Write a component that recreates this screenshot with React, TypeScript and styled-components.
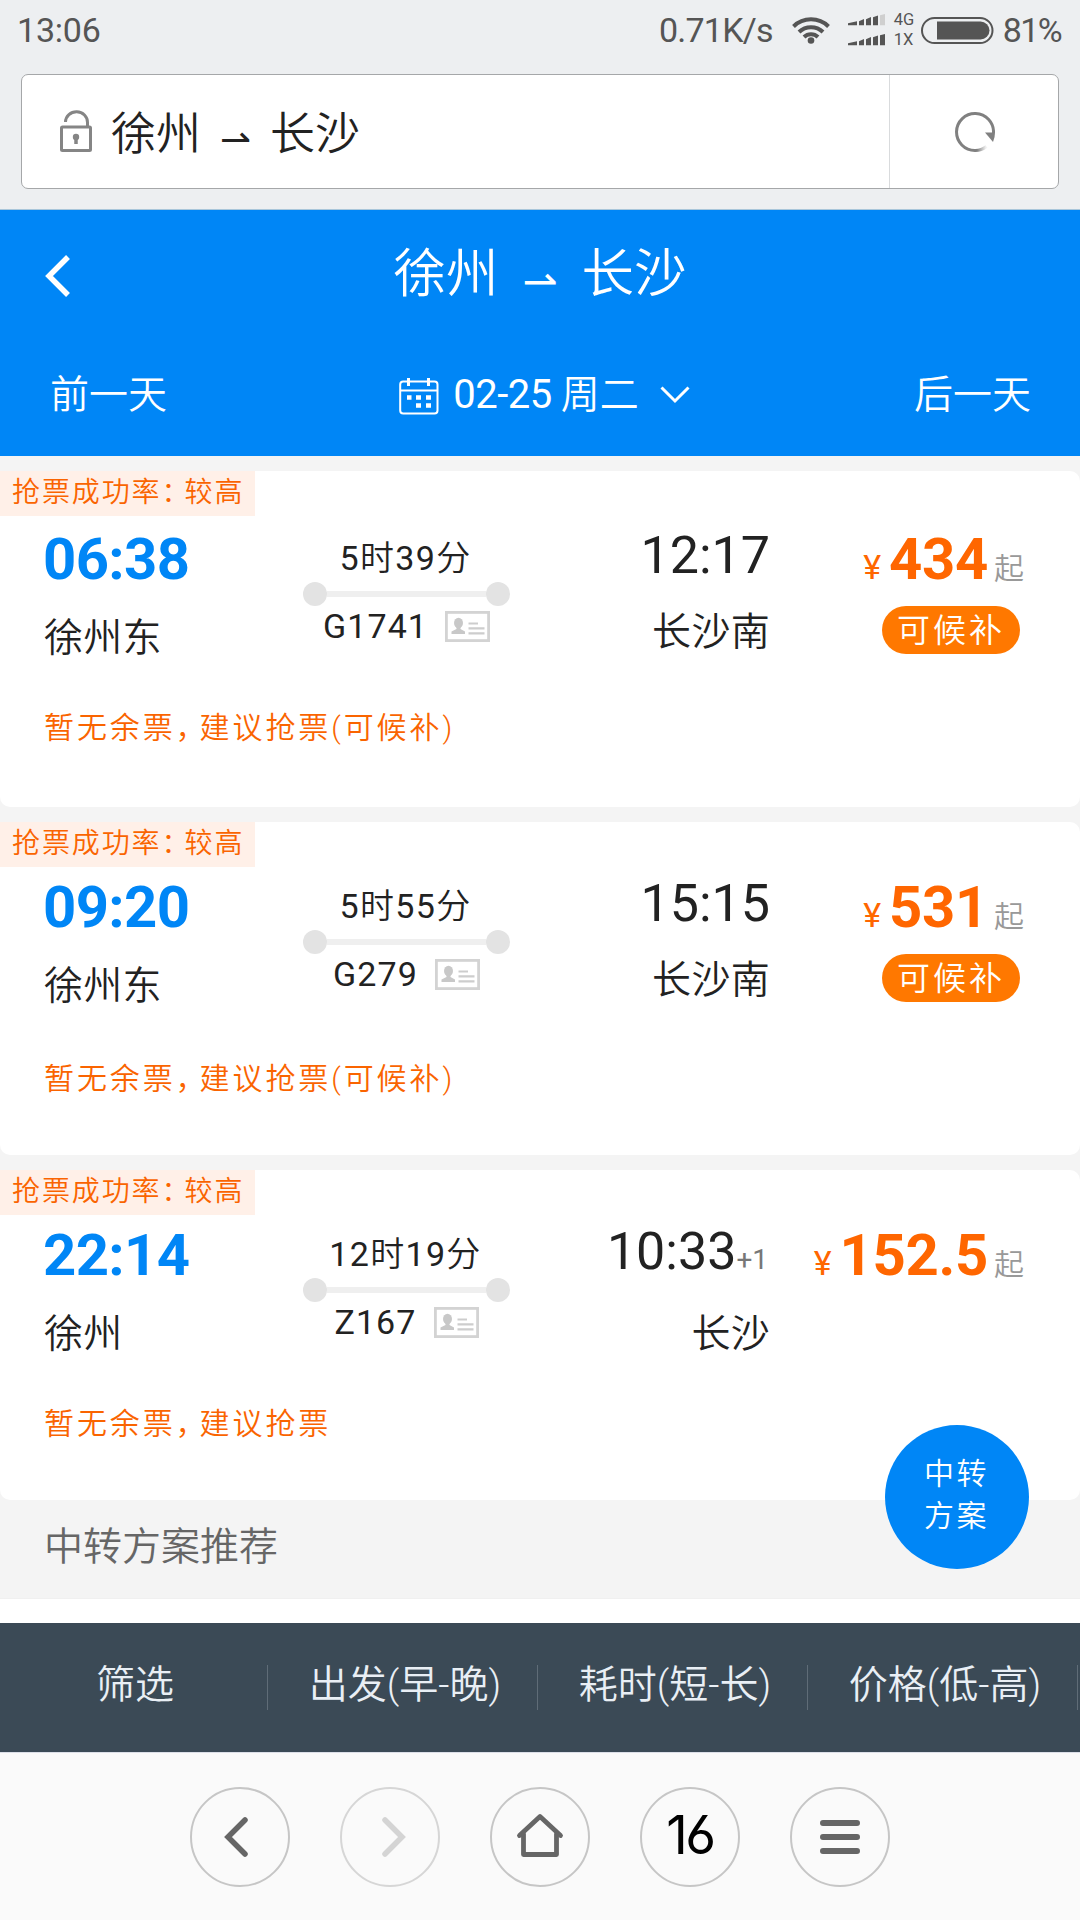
import React from "react";
import styled, { createGlobalStyle } from "styled-components";

const GlobalStyle = createGlobalStyle`
  * { box-sizing: border-box; }
  body {
    margin: 0;
    background: #ffffff;
    font-family: Roboto, "Noto Sans CJK SC", sans-serif;
    color: #222222;
  }
`;

const Screen = styled.div`
  width: 1080px;
  height: 1920px;
  display: flex;
  flex-direction: column;
  overflow: hidden;
  background: #ffffff;
`;

/* ---------- status bar ---------- */

const StatusBar = styled.header`
  height: 60px;
  padding: 0 19px 0 17px;
  display: flex;
  align-items: center;
  background: #edeff1;
  color: #555555;
  font-size: 34px;
  line-height: 60px;
`;

const Clock = styled.span`
  flex: 1;
  letter-spacing: -0.2px;
`;

const Speed = styled.span`
  letter-spacing: -0.8px;
  margin-right: 19px;
`;

const Percent = styled.span`
  letter-spacing: -1.6px;
`;

const WifiSvg = styled.svg`
  width: 38px;
  height: 28px;
  margin-right: 18px;
`;

const SignalSvg = styled.svg`
  width: 37px;
  height: 32px;
  margin-right: 9px;
`;

const NetLabels = styled.span`
  display: flex;
  flex-direction: column;
  width: 27px;
  font-size: 16.5px;
  line-height: 20px;
`;

const BatterySvg = styled.svg`
  width: 73px;
  height: 27px;
  margin-right: 9px;
`;

/* ---------- address bar ---------- */

const AddressArea = styled.div`
  height: 150px;
  padding: 14px 21px 0;
  background: #edeff1;
  border-bottom: 1px solid #a9c6da;
`;

const AddressBox = styled.div`
  height: 115px;
  display: flex;
  background: #ffffff;
  border: 1px solid #a5a7a9;
  border-radius: 7px;
`;

const AddressMain = styled.div`
  flex: 1;
  display: flex;
  align-items: center;
  padding-left: 38px;
`;

const LockSvg = styled.svg`
  width: 32px;
  height: 42px;
  margin: -1px 19px 0 0;
`;

const Route = styled.div<{ $size: number; $gap: number; $top: number }>`
  display: flex;
  align-items: center;
  gap: ${(p) => p.$gap}px;
  padding-top: ${(p) => p.$top}px;
  font-size: ${(p) => p.$size}px;
  font-weight: 350;
  line-height: 1.4;
`;

const Harpoon = styled.span<{ $size: number; $drop: number }>`
  font-family: "DejaVu Sans", sans-serif;
  font-weight: 400;
  font-size: ${(p) => p.$size}px;
  line-height: 1;
  padding-top: ${(p) => p.$drop}px;
`;

const Reload = styled.button`
  width: 169px;
  padding: 0;
  border: 0;
  border-left: 1px solid #d9dbdd;
  background: none;
  display: flex;
  align-items: center;
  justify-content: center;
`;

/* ---------- blue header ---------- */

const Header = styled.section`
  height: 246px;
  background: #0086f6;
  color: #ffffff;
  display: flex;
  flex-direction: column;
`;

const TitleRow = styled.div`
  height: 126px;
  display: grid;
  grid-template-columns: 1fr auto 1fr;
  align-items: center;
  padding: 0 45px;
`;

const BackSvg = styled.svg`
  width: 25px;
  height: 42px;
  margin-top: 6px;
`;

const DateRow = styled.div`
  height: 120px;
  padding: 0 49px 2px 50px;
  display: grid;
  grid-template-columns: 1fr auto 1fr;
  align-items: center;
  font-size: 39px;
`;

const DayLink = styled.span<{ $end?: boolean }>`
  text-align: ${(p) => (p.$end ? "right" : "left")};
  line-height: 60px;
  font-weight: 350;
`;

const DatePick = styled.div`
  display: flex;
  align-items: center;
  padding-left: 8px;
  line-height: 60px;
`;

const CalendarSvg = styled.svg`
  width: 40px;
  height: 38px;
  margin: 1px 14px 0 0;
`;

const DateText = styled.span`
  font-size: 40px;
  letter-spacing: -0.5px;
  margin-right: 9px;
`;

const Weekday = styled.span`
  font-weight: 350;
  margin-right: 21px;
`;

/* ---------- train list ---------- */

const List = styled.main`
  background: #f4f4f4;
  padding-top: 15px;
  display: flex;
  flex-direction: column;
  gap: 15px;
`;

const Card = styled.article<{ $height: number }>`
  height: ${(p) => p.$height}px;
  background: #ffffff;
  border-radius: 10px;
`;

const Tag = styled.div`
  width: 255px;
  height: 45px;
  padding-left: 12px;
  background: #fff0e8;
  color: #fa6400;
  font-size: 28px;
  line-height: 43px;
  letter-spacing: 1.9px;
  font-weight: 350;
  white-space: nowrap;
`;

const Punct = styled.span<{ $pull: number }>`
  letter-spacing: ${(p) => -p.$pull}px;
`;

const Trip = styled.div<{ $lead: number; $tail: number }>`
  padding: ${(p) => p.$lead}px 0 0 45px;
  height: ${(p) => p.$lead + 189 + p.$tail}px;
  display: grid;
  grid-template-columns: 258px 207px 258px 256px;
`;

const Depart = styled.div`
  display: flex;
  flex-direction: column;
  margin-left: -1px;
`;

const DepartTime = styled.strong`
  margin-left: -1px;
  color: #0086f6;
  font-size: 58px;
  font-weight: 700;
  line-height: 80px;
  letter-spacing: -0.6px;
`;

const Station = styled.span<{ $drop?: number; $line?: number }>`
  font-size: 39px;
  line-height: ${(p) => p.$line || 78}px;
  letter-spacing: 0.3px;
  font-weight: 350;
  padding-top: ${(p) => p.$drop || 0}px;
`;

const Destination = styled(Station)`
  margin-right: -2px;
`;

const Middle = styled.div`
  display: flex;
  flex-direction: column;
  align-items: center;
  padding-top: 17px;
`;

const Duration = styled.span`
  font-size: 34px;
  line-height: 44px;
  letter-spacing: 1.3px;
  margin-right: 2px;
`;

const Cjk = styled.span`
  font-weight: 350;
  font-size: 34px;
`;

const Track = styled.div`
  width: 207px;
  height: 24px;
  margin-top: 2px;
  display: flex;
  align-items: center;
`;

const Dot = styled.i`
  width: 24px;
  height: 24px;
  border-radius: 50%;
  background: #e3e3e3;
`;

const Rail = styled.i`
  flex: 1;
  height: 6px;
  background: #efefef;
`;

const TrainNo = styled.div`
  height: 40px;
  display: flex;
  align-items: center;
  font-size: 34px;
  line-height: 40px;
  letter-spacing: 1.1px;
`;

const IdSvg = styled.svg`
  width: 45px;
  height: 31px;
  margin-left: 17px;
`;

const Arrive = styled.div`
  display: flex;
  flex-direction: column;
  align-items: flex-end;
`;

const ArriveTime = styled.span<{ $shift: number }>`
  font-size: 52px;
  line-height: 73px;
  margin-right: ${(p) => -p.$shift}px;
`;

const PlusDay = styled.small`
  font-size: 28px;
  line-height: 28px;
  color: #777777;
`;

const Price = styled.div`
  display: flex;
  flex-direction: column;
  align-items: flex-end;
`;

const Amount = styled.div`
  height: 80px;
  display: flex;
  align-items: baseline;
  line-height: 80px;
  color: #ff6600;
`;

const Yen = styled.span`
  font-size: 34px;
  margin-right: 8px;
`;

const Figure = styled.strong`
  font-size: 58px;
  font-weight: 700;
  letter-spacing: -0.3px;
`;

const From = styled.span`
  color: #999999;
  font-size: 30px;
  margin-left: 6px;
  font-weight: 350;
`;

const Badge = styled.span`
  width: 138px;
  height: 48px;
  margin: 7px 4px 0 0;
  padding-left: 15px;
  border-radius: 24px;
  background: #ff7800;
  color: #ffffff;
  font-size: 33px;
  line-height: 50px;
  letter-spacing: 3px;
  font-weight: 350;
`;

const Hint = styled.p`
  margin: 0 0 0 44px;
  color: #fa6400;
  font-size: 30px;
  line-height: 40px;
  letter-spacing: 2.9px;
  font-weight: 350;
`;

/* ---------- transfer + sort ---------- */

const TransferBar = styled.section`
  position: relative;
  height: 99px;
  padding: 14px 0 0 44px;
  background: #f4f4f4;
  border-bottom: 1px solid #f0f0f0;
  color: #666666;
  font-size: 39px;
  line-height: 66px;
  font-weight: 350;
`;

const Floating = styled.button`
  position: absolute;
  right: 51px;
  top: -75px;
  width: 144px;
  height: 144px;
  padding: 0 1px 5px 0;
  border: 0;
  border-radius: 50%;
  background: #0086f6;
  color: #ffffff;
  font: 350 30px/42px Roboto, "Noto Sans CJK SC", sans-serif;
  letter-spacing: 2.4px;
  white-space: pre-line;
`;

const SortBar = styled.nav`
  height: 129px;
  margin-top: 24px;
  display: grid;
  grid-template-columns: repeat(4, 270px);
  align-items: center;
  background: #3b4a56;
  color: #e9eff5;
`;

const SortItem = styled.div`
  display: flex;
  align-items: center;
  padding-right: 2px;
`;

const SortLabel = styled.span`
  flex: 1;
  padding: 0 0 6px 3px;
  text-align: center;
  font-size: 39px;
  line-height: 60px;
  font-weight: 350;
  white-space: nowrap;
`;

const SortRule = styled.i`
  width: 1px;
  height: 45px;
  background: #5f6c77;
`;

/* ---------- browser toolbar ---------- */

const Toolbar = styled.footer`
  height: 168px;
  display: flex;
  justify-content: center;
  gap: 50px;
  padding-top: 34px;
  background: #fafafa;
  border-top: 1px solid #dcdfe8;
`;

const RoundButton = styled.button<{ $dim?: boolean }>`
  width: 100px;
  height: 100px;
  padding: 0;
  border: 2px solid ${(p) => (p.$dim ? "#d6d6d6" : "#c6c6c6")};
  border-radius: 50%;
  background: transparent;
  color: ${(p) => (p.$dim ? "#d4d4d4" : "#666666")};
  display: flex;
  align-items: center;
  justify-content: center;
`;

const TabCount = styled.span`
  color: #000000;
  font-family: Inter, sans-serif;
  font-feature-settings: "cv03";
  font-size: 53px;
  font-weight: 400;
  line-height: 60px;
  letter-spacing: -2.5px;
  padding-bottom: 4px;
`;

/* ---------- icons ---------- */

const Wifi = () => (
  <WifiSvg viewBox="0 0 38 28" fill="none" stroke="#555" strokeWidth="4">
    <path d="M1.5 10.5a25 25 0 0 1 35 0" />
    <path d="M7 16a17.3 17.3 0 0 1 24 0" />
    <path d="M12 21a10 10 0 0 1 14 0" />
    <circle cx="19" cy="24.5" r="3.3" fill="#555" stroke="none" />
  </WifiSvg>
);

const SignalRow = ({ y, weak }: { y: number; weak?: boolean }) => (
  <g transform={`translate(0 ${y})`} fill="#555">
    <path d="M0 9.3 9 7.2v4.1H0z" />
    <path d="M11 7.3 16 5v6.3h-5z" />
    <path d="M18 5.2 23 3v8.3h-5z" />
    <path d="M25 3.2 30 1.5v9.8h-5z" />
    <path d="M32 1.2 37 0v11.3h-5z" fill={weak ? "#cfcfcf" : "#555"} />
  </g>
);

const Signal = () => (
  <SignalSvg viewBox="0 0 37 32">
    <SignalRow y={0} weak />
    <SignalRow y={20} />
  </SignalSvg>
);

const Battery = () => (
  <BatterySvg viewBox="0 0 73 27">
    <rect x="1" y="1" width="70.5" height="25" rx="12.5" fill="none" stroke="#555" strokeWidth="2" />
    <path d="M16 4.5h43.5a9 9 0 0 1 0 18H16z" fill="#555" />
  </BatterySvg>
);

const Lock = () => (
  <LockSvg viewBox="0 0 32 42" fill="none" stroke="#858585">
    <rect x="1.5" y="17" width="29" height="23.5" rx="1" strokeWidth="3" />
    <path d="M5.5 12a11 10.5 0 0 1 22 0.5V17" strokeWidth="3" />
    <circle cx="16" cy="27" r="3.2" fill="#858585" stroke="none" />
    <path d="M16 27v7" strokeWidth="3.5" />
  </LockSvg>
);

const ReloadIcon = () => (
  <svg width="42" height="42" viewBox="0 0 42 42" fill="none">
    <defs>
      <linearGradient id="fade" x1="24" y1="0" x2="33" y2="0" gradientUnits="userSpaceOnUse">
        <stop offset="0" stopColor="#808080" />
        <stop offset="1" stopColor="#808080" stopOpacity="0.1" />
      </linearGradient>
    </defs>
    <path d="M40.5 22A18.5 18.5 0 1 0 22 39.5" stroke="#808080" strokeWidth="3" />
    <path d="M21.5 39.5Q28 39.8 33.5 35.5" stroke="url(#fade)" strokeWidth="3" />
    <path d="M32 21.5h10q0 5-2 9.5z" fill="#808080" />
  </svg>
);

const Back = () => (
  <BackSvg viewBox="0 0 25 42" fill="none" stroke="#fff" strokeWidth="5.5">
    <path d="M23 2 4 21l19 19" />
  </BackSvg>
);

const CalendarIcon = () => (
  <CalendarSvg viewBox="0 0 40 38" fill="none" stroke="#fff">
    <rect x="1.2" y="4.5" width="37.3" height="32" rx="3" strokeWidth="2" />
    <path d="M1 13.5h38" strokeWidth="1.8" />
    <path d="M9.5 1v8M29.5 1v8" strokeWidth="3" />
    <path d="M8 20.5h4.5M17 20.5h5M27 20.5h5M17 28.5h5M27 28.5h5" strokeWidth="4.5" />
  </CalendarSvg>
);

const IdCard = () => (
  <IdSvg viewBox="0 0 45 31">
    <rect x="1.4" y="1.4" width="42.2" height="28.2" fill="#fff" stroke="#d3d3d3" strokeWidth="2.8" />
    <ellipse cx="13.5" cy="12" rx="4.5" ry="5.2" fill="#c8c8c8" />
    <path d="M11.5 15h4v3l4.5 2.5v2.5H6.5v-2.5l5-2.5z" fill="#c8c8c8" />
    <path d="M23.5 12.5h9.5M23.5 17.3h16M23.5 22.3h16" stroke="#cdcdcd" strokeWidth="2.2" />
  </IdSvg>
);

/* ---------- data ---------- */

type Train = {
  height: number;
  lead: number;
  tail: number;
  depart: string;
  from: string;
  duration: [string, string];
  no: string;
  arrive: string;
  plusDay?: string;
  to: string;
  price: string;
  waitlist?: boolean;
};

const trains: Train[] = [
  { height: 336, lead: 3, tail: 0, depart: "06:38", from: "徐州东", duration: ["5", "39"], no: "G1741", arrive: "12:17", to: "长沙南", price: "434", waitlist: true },
  { height: 333, lead: 0, tail: 3, depart: "09:20", from: "徐州东", duration: ["5", "55"], no: "G279", arrive: "15:15", to: "长沙南", price: "531", waitlist: true },
  { height: 330, lead: 0, tail: 0, depart: "22:14", from: "徐州", duration: ["12", "19"], no: "Z167", arrive: "10:33", plusDay: "+1", to: "长沙", price: "152.5" },
];

const TrainCard = ({ train }: { train: Train }) => (
  <Card $height={train.height}>
    <Tag>
      抢票成功率<Punct $pull={5}>：</Punct>较高
    </Tag>
    <Trip $lead={train.lead} $tail={train.tail}>
      <Depart>
        <DepartTime>{train.depart}</DepartTime>
        <Station>{train.from}</Station>
      </Depart>
      <Middle>
        <Duration>
          {train.duration[0]}
          <Cjk>时</Cjk>
          {train.duration[1]}
          <Cjk>分</Cjk>
        </Duration>
        <Track>
          <Dot />
          <Rail />
          <Dot />
        </Track>
        <TrainNo>
          {train.no}
          <IdCard />
        </TrainNo>
      </Middle>
      <Arrive>
        <ArriveTime $shift={train.plusDay ? 0 : 2}>
          {train.arrive}
          {train.plusDay && <PlusDay>{train.plusDay}</PlusDay>}
        </ArriveTime>
        <Destination $line={80} $drop={train.plusDay ? 6 : 0}>{train.to}</Destination>
      </Arrive>
      <Price>
        <Amount>
          <Yen>¥</Yen>
          <Figure>{train.price}</Figure>
          <From>起</From>
        </Amount>
        {train.waitlist && <Badge>可候补</Badge>}
      </Price>
    </Trip>
    <Hint>
      暂无余票<Punct $pull={6}>，</Punct>建议抢票{train.waitlist && "(可候补)"}
    </Hint>
  </Card>
);

const sorts = ["筛选", "出发(早-晚)", "耗时(短-长)", "价格(低-高)"];

export default function App() {
  return (
    <Screen>
      <GlobalStyle />
      <StatusBar>
        <Clock>13:06</Clock>
        <Speed>0.71K/s</Speed>
        <Wifi />
        <Signal />
        <NetLabels>
          <span>4G</span>
          <span>1X</span>
        </NetLabels>
        <Battery />
        <Percent>81%</Percent>
      </StatusBar>

      <AddressArea>
        <AddressBox>
          <AddressMain>
            <Lock />
            <Route $size={45} $gap={19} $top={6}>
              <span>徐州</span>
              <Harpoon $size={37} $drop={9}>⇀</Harpoon>
              <span>长沙</span>
            </Route>
          </AddressMain>
          <Reload>
            <ReloadIcon />
          </Reload>
        </AddressBox>
      </AddressArea>

      <Header>
        <TitleRow>
          <Back />
          <Route $size={52.5} $gap={24} $top={4}>
            <span>徐州</span>
            <Harpoon $size={42} $drop={14}>⇀</Harpoon>
            <span>长沙</span>
          </Route>
        </TitleRow>
        <DateRow>
          <DayLink>前一天</DayLink>
          <DatePick>
            <CalendarIcon />
            <DateText>02-25</DateText>
            <Weekday>周二</Weekday>
            <svg width="30" height="18" viewBox="0 0 30 18" fill="none" stroke="#fff" strokeWidth="3">
              <path d="M1.5 1.5 15 15 28.5 1.5" />
            </svg>
          </DatePick>
          <DayLink $end>后一天</DayLink>
        </DateRow>
      </Header>

      <List>
        {trains.map((t) => (
          <TrainCard key={t.no} train={t} />
        ))}
      </List>

      <TransferBar>
        中转方案推荐
        <Floating>{"中转\n方案"}</Floating>
      </TransferBar>

      <SortBar>
        {sorts.map((s) => (
          <SortItem key={s}>
            <SortLabel>{s}</SortLabel>
            <SortRule />
          </SortItem>
        ))}
      </SortBar>

      <Toolbar>
        <RoundButton>
          <svg width="44" height="44" viewBox="0 0 44 44" fill="none" stroke="currentColor" strokeWidth="5.5" strokeLinecap="round">
            <path d="M27 5 10 22l17 17" />
          </svg>
        </RoundButton>
        <RoundButton $dim>
          <svg width="44" height="44" viewBox="0 0 44 44" fill="none" stroke="currentColor" strokeWidth="5.5" strokeLinecap="round">
            <path d="M17 5l17 17-17 17" />
          </svg>
        </RoundButton>
        <RoundButton>
          <svg width="50" height="50" viewBox="0 0 50 50" fill="none" stroke="currentColor" strokeWidth="4.8" strokeLinecap="round" strokeLinejoin="round">
            <path d="M4.5 23.5 25 4.5l20.5 19" />
            <path d="M8.5 22v20.5h33V22" />
          </svg>
        </RoundButton>
        <RoundButton>
          <TabCount>16</TabCount>
        </RoundButton>
        <RoundButton>
          <svg width="40" height="36" viewBox="0 0 40 36" stroke="currentColor" strokeWidth="6" strokeLinecap="round">
            <path d="M3 4h34M3 18h34M3 32h34" />
          </svg>
        </RoundButton>
      </Toolbar>
    </Screen>
  );
}
